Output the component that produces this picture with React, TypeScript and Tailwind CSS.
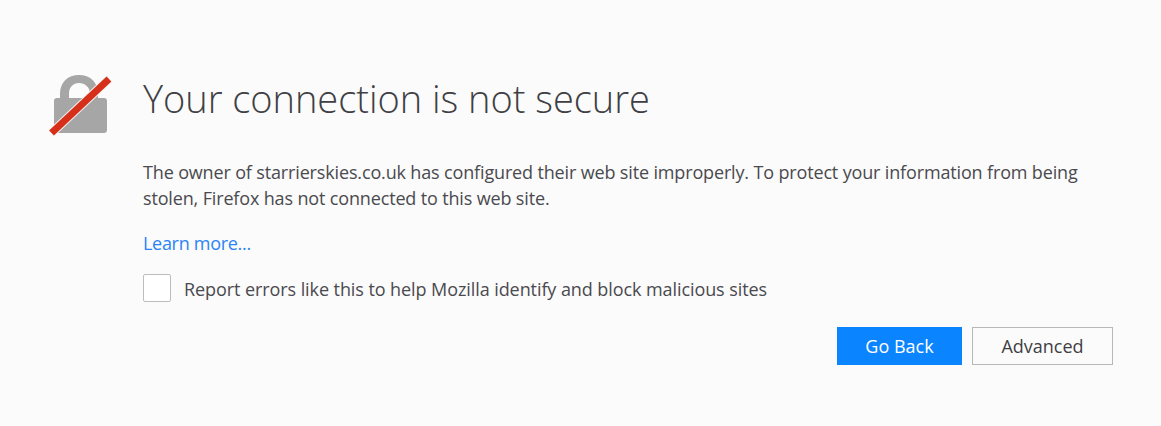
export default function App() {
  return (
    <div className="h-[426px] w-[1161px] overflow-hidden bg-[#fbfbfb] font-['Open_Sans',sans-serif] text-[#4a4a4f]">
      <div className="flex pl-[48px] pr-[48px] pt-[73px]">
        <div className="w-[95px] shrink-0">
          <svg width="66" height="66" viewBox="0 0 66 66" className="-mt-[1px]">
            <path d="M12 30 V22 C12 10 20 3 31 3 C42 3 50 10 50 22 V30 H42 V22 C42 15 37 11 31 11 C25 11 21 15 21 22 V30 Z" fill="#a6a6a6" />
            <rect x="6" y="26" width="53" height="35" rx="3" fill="#a6a6a6" />
            <path d="M3.5 61 L61 7" stroke="#f3f3f3" strokeWidth="9" />
            <path d="M3.5 61 L61 7" stroke="#d7301a" strokeWidth="7" />
          </svg>
        </div>
        <div className="flex-1">
          <h1 className="text-[38px] leading-[50px] font-light tracking-[-0.03px] text-[#3f3f44]">Your connection is not secure</h1>
          <p className="mt-[36px] w-[950px] text-[18px] leading-[26px] tracking-[-0.15px]">
            The owner of starrierskies.co.uk has configured their web site improperly. To protect your information from being stolen, Firefox has not connected to this web site.
          </p>
          <a className="mt-[19px] block text-[18px] leading-[26px] tracking-[-0.3px] text-[#2a84f5]">Learn more...</a>
          <label className="mt-[17px] flex items-center gap-[13px]">
            <span className="h-[28px] w-[28px] rounded-[2px] border border-[#bdbdbd] bg-white" />
            <span className="pt-[2px] text-[18px] leading-[28px] tracking-[-0.08px]">Report errors like this to help Mozilla identify and block malicious sites</span>
          </label>
          <div className="mt-[24px] flex justify-end gap-[10px]">
            <button className="h-[38px] w-[125px] bg-[#0a84ff] text-[18px] text-white">Go Back</button>
            <button className="h-[38px] w-[141px] border border-[#b8b8b8] bg-[#fbfbfb] text-[18px] text-[#3f3f44]">Advanced</button>
          </div>
        </div>
      </div>
    </div>
  );
}
